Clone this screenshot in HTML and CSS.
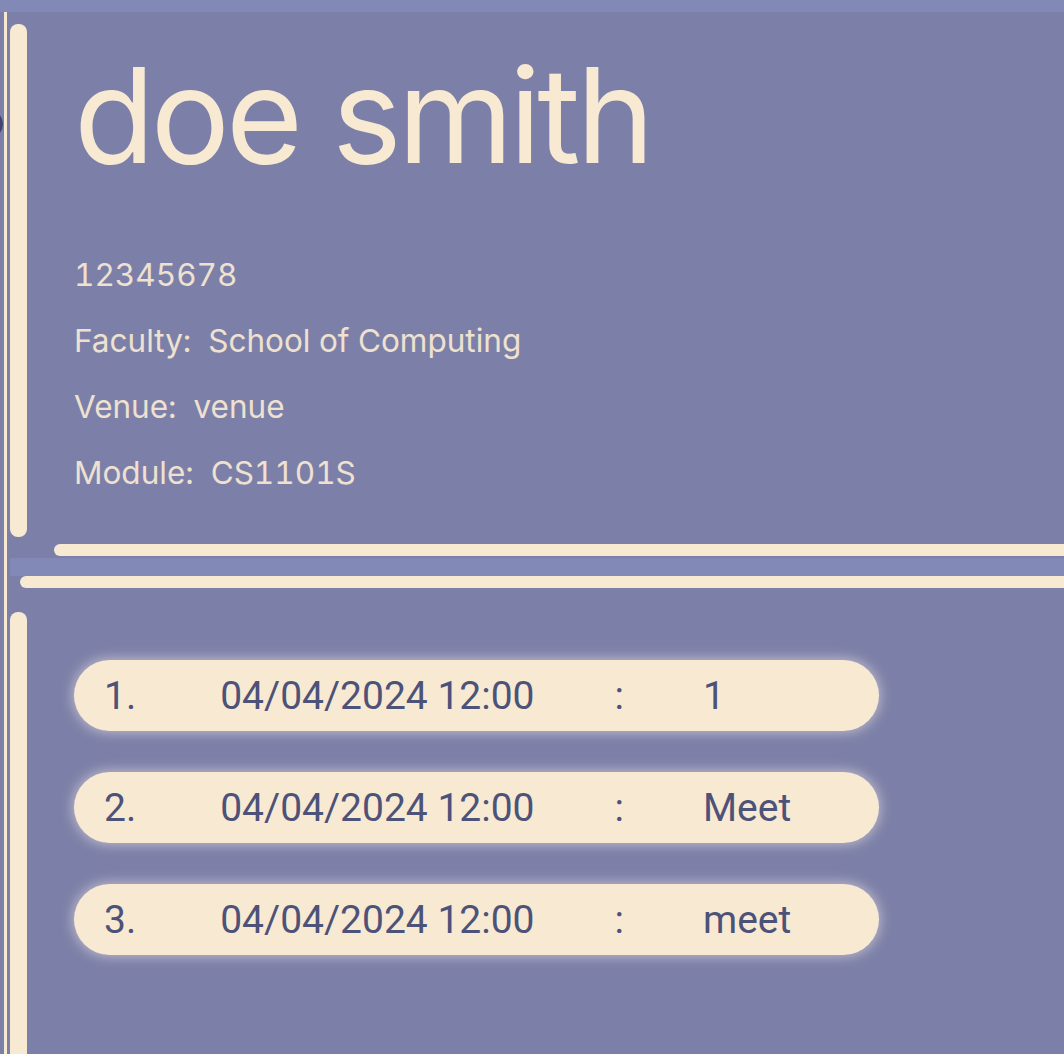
FILE: index.html
```html
<!DOCTYPE html>
<html>
<head>
<meta charset="utf-8">
<link rel="stylesheet" href="styles.css">
</head>
<body>
<div class="top-strip"></div>
<div class="app">
  <div class="rail"></div>
  <div class="panes">
    <section class="profile">
      <div class="profile-row">
        <div class="vbar vbar-top"></div>
        <div class="info">
          <h1 class="name">doe smith</h1>
          <div class="detail">12345678</div>
          <div class="detail">Faculty:&nbsp; School of Computing</div>
          <div class="detail">Venue:&nbsp; venue</div>
          <div class="detail">Module:&nbsp; CS1101S</div>
        </div>
      </div>
      <div class="hbar hbar-one"></div>
    </section>
    <div class="divider-strip"></div>
    <div class="hbar hbar-two"></div>
    <section class="schedule">
      <div class="vbar vbar-bottom"></div>
      <ul class="pills">
        <li class="pill"><span class="idx">1.</span><span class="when">04/04/2024 12:00</span><span class="sep">:</span><span class="what">1</span></li>
        <li class="pill"><span class="idx">2.</span><span class="when">04/04/2024 12:00</span><span class="sep">:</span><span class="what">Meet</span></li>
        <li class="pill"><span class="idx">3.</span><span class="when">04/04/2024 12:00</span><span class="sep">:</span><span class="what">meet</span></li>
      </ul>
    </section>
  </div>
  <div class="clipped-dot"></div>
</div>
</body>
</html>
```

FILE: styles.css
```css
html, body {
  margin: 0;
  padding: 0;
  height: 100%;
  overflow: hidden;
}
body {
  background: #7c80a8;
  font-family: Inter, "Noto Sans", sans-serif;
}
.top-strip {
  height: 12px;
  background: #8389b6;
}
.app {
  position: relative;
  display: flex;
  height: 1042px;
}
.rail {
  width: 3px;
  margin-left: 4px;
  background: #f8e9d3;
  flex: none;
}
.panes {
  flex: 1;
  margin-left: 3px;
  display: flex;
  flex-direction: column;
  min-width: 0;
}
.profile {
  padding-top: 12px;
  height: 534px;
  display: flex;
  flex-direction: column;
}
.profile-row {
  display: flex;
  height: 513px;
}
.vbar {
  width: 17px;
  background: #f8e9d3;
  border-radius: 8px;
  flex: none;
}
.info {
  margin-left: 47px;
  display: flex;
  flex-direction: column;
  color: #efe1d0;
}
.name {
  margin: 0;
  font-weight: 400;
  font-size: 132px;
  line-height: 150px;
  letter-spacing: -4px;
  color: #f8e9d3;
  margin-top: 16px;
  margin-bottom: 52px;
}
.detail {
  font-size: 31.5px;
  line-height: 66px;
  font-variant-numeric: tabular-nums;
}
.hbar {
  height: 12px;
  background: #f8e9d3;
  border-radius: 6px 0 0 6px;
}
.hbar-one {
  margin-top: 7px;
  margin-left: 44px;
}
.divider-strip {
  height: 18px;
  background: #8389b6;
}
.hbar-two {
  margin-left: 10px;
}
.schedule {
  display: flex;
  flex: 1;
  padding-top: 24px;
}
.vbar-bottom {
  border-radius: 8px 8px 0 0;
}
.pills {
  list-style: none;
  margin: 48px 0 0 47px;
  padding: 0;
  display: flex;
  flex-direction: column;
  gap: 41px;
}
.pill {
  width: 805px;
  height: 71px;
  box-sizing: border-box;
  border-radius: 36px;
  background: #f8e9d3;
  box-shadow: 0 0 12px 2px rgba(240, 228, 230, 0.55);
  display: flex;
  align-items: center;
  padding-left: 30px;
  font-family: Roboto, sans-serif;
  font-size: 39px;
  color: #4d5279;
}
.idx {
  margin-right: 84px;
}
.sep {
  margin-left: 80px;
  margin-right: 79px;
}
.clipped-dot {
  position: absolute;
  left: -25px;
  top: 98px;
  width: 28px;
  height: 28px;
  border-radius: 50%;
  background: #3f4472;
}
```
